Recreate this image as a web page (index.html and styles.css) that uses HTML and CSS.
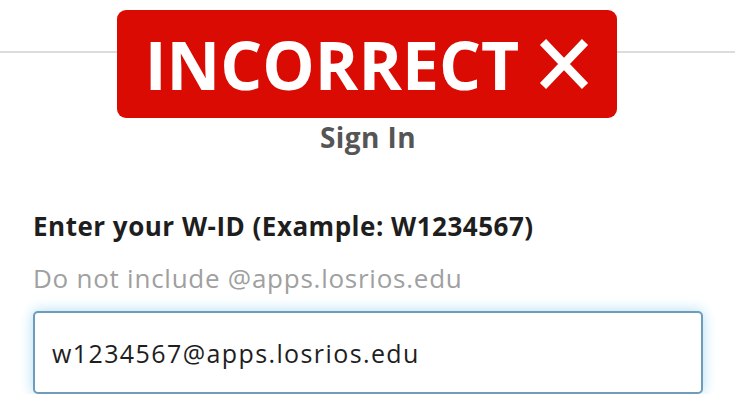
FILE: index.html
```html
<!DOCTYPE html>
<html lang="en">
<head>
    <meta charset="UTF-8">
    <title>Sign In</title>
    <meta name="viewport" content="width=device-width, initial-scale=1">
    <link rel="stylesheet" href="styles.css">
</head>
<body>
<div class="topbar"></div>
<div class="stamp">
    <span class="stamp-text">INCORRECT</span>
    <svg class="stamp-x" width="50" height="52" viewBox="0 0 50 52">
        <path d="M4 4 L46 48 M46 4 L4 48" stroke="#fff" stroke-width="8.5" stroke-linecap="butt"/>
    </svg>
</div>
<div class="container">
    <h2>Sign In</h2>
    <form>
        <label for="wid">Enter your W-ID (Example: W1234567)</label>
        <p class="hint">Do not include @apps.losrios.edu</p>
        <input type="text" id="wid" name="wid" value="w1234567@apps.losrios.edu">
    </form>
</div>
</body>
</html>
```

FILE: styles.css
```css
body { font-family: "Open Sans", sans-serif; background: #fff; margin: 0; padding: 0; }
.topbar { height: 51px; border-bottom: 2px solid #dcdcdc; }
.stamp { position: absolute; left: 117px; top: 10px; width: 500px; height: 108px; background: #d90b02; border-radius: 9px; display: flex; align-items: center; justify-content: center; gap: 20px; }
.stamp-text { font-weight: bold; font-size: 66px; color: #fff; line-height: 1; }
.stamp-x { display: block; }
.container { padding: 0 32px 0 33px; }
h2 { text-align: center; color: #555; font-size: 28px; letter-spacing: 0.4px; font-weight: bold; margin: 68px 0 0 0; line-height: 32px; }
form label { display: block; margin-top: 58px; font-weight: bold; font-size: 26px; letter-spacing: 0.5px; color: #1e1e1e; line-height: 30px; }
.hint { margin: 22px 0 0 0; font-size: 26px; letter-spacing: 0.75px; color: #a0a0a0; line-height: 30px; }
input[type="text"] { box-sizing: border-box; width: 100%; height: 83px; margin-top: 18px; padding: 0 17px; border: 2px solid #6e9cba; border-radius: 5px; font-family: "Open Sans", sans-serif; font-size: 25px; letter-spacing: 1.4px; color: #1e1e1e; box-shadow: 0 0 14px #aadcf3; outline: none; }
```
